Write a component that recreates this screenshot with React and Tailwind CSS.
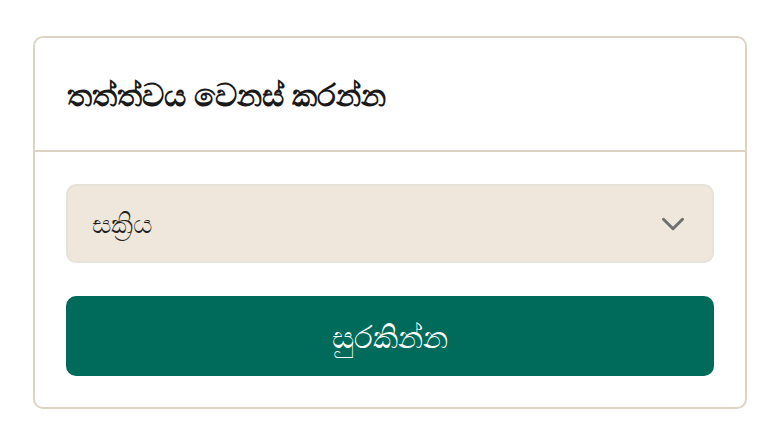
import { ChevronDown } from "lucide-react";

const App = () => {
  return (
    <div className="min-h-screen w-full bg-white pt-[36px] px-[33px] font-['Noto_Sans','Liberation_Sans',sans-serif]">
      <div className="w-[714px] rounded-[10px] border-2 border-[#ddd4c4] bg-white">
        <div className="h-[114px] flex items-center px-[32px] border-b-2 border-[#ddd4c4]">
          <h2 className="text-[31px] font-bold text-[#1a1a1a]">
            තත්ත්වය වෙනස් කරන්න
          </h2>
        </div>
        <div className="flex flex-col gap-[33px] px-[31px] pt-[32px] pb-[31px]">
          <div className="h-[79px] rounded-[10px] border-2 border-[#e6e1d9] bg-[#efe7dc] flex items-center justify-between pl-[24px] pr-[20px]">
            <span className="text-[27px] text-[#1f1f1f]">සක්‍රිය</span>
            <ChevronDown className="w-[38px] h-[38px] text-[#707070]" strokeWidth={1.9} />
          </div>
          <button className="h-[80px] rounded-[10px] bg-[#006b5a] text-white text-[31px] font-medium flex items-center justify-center">
            සුරකින්න
          </button>
        </div>
      </div>
    </div>
  );
};

export default App;
